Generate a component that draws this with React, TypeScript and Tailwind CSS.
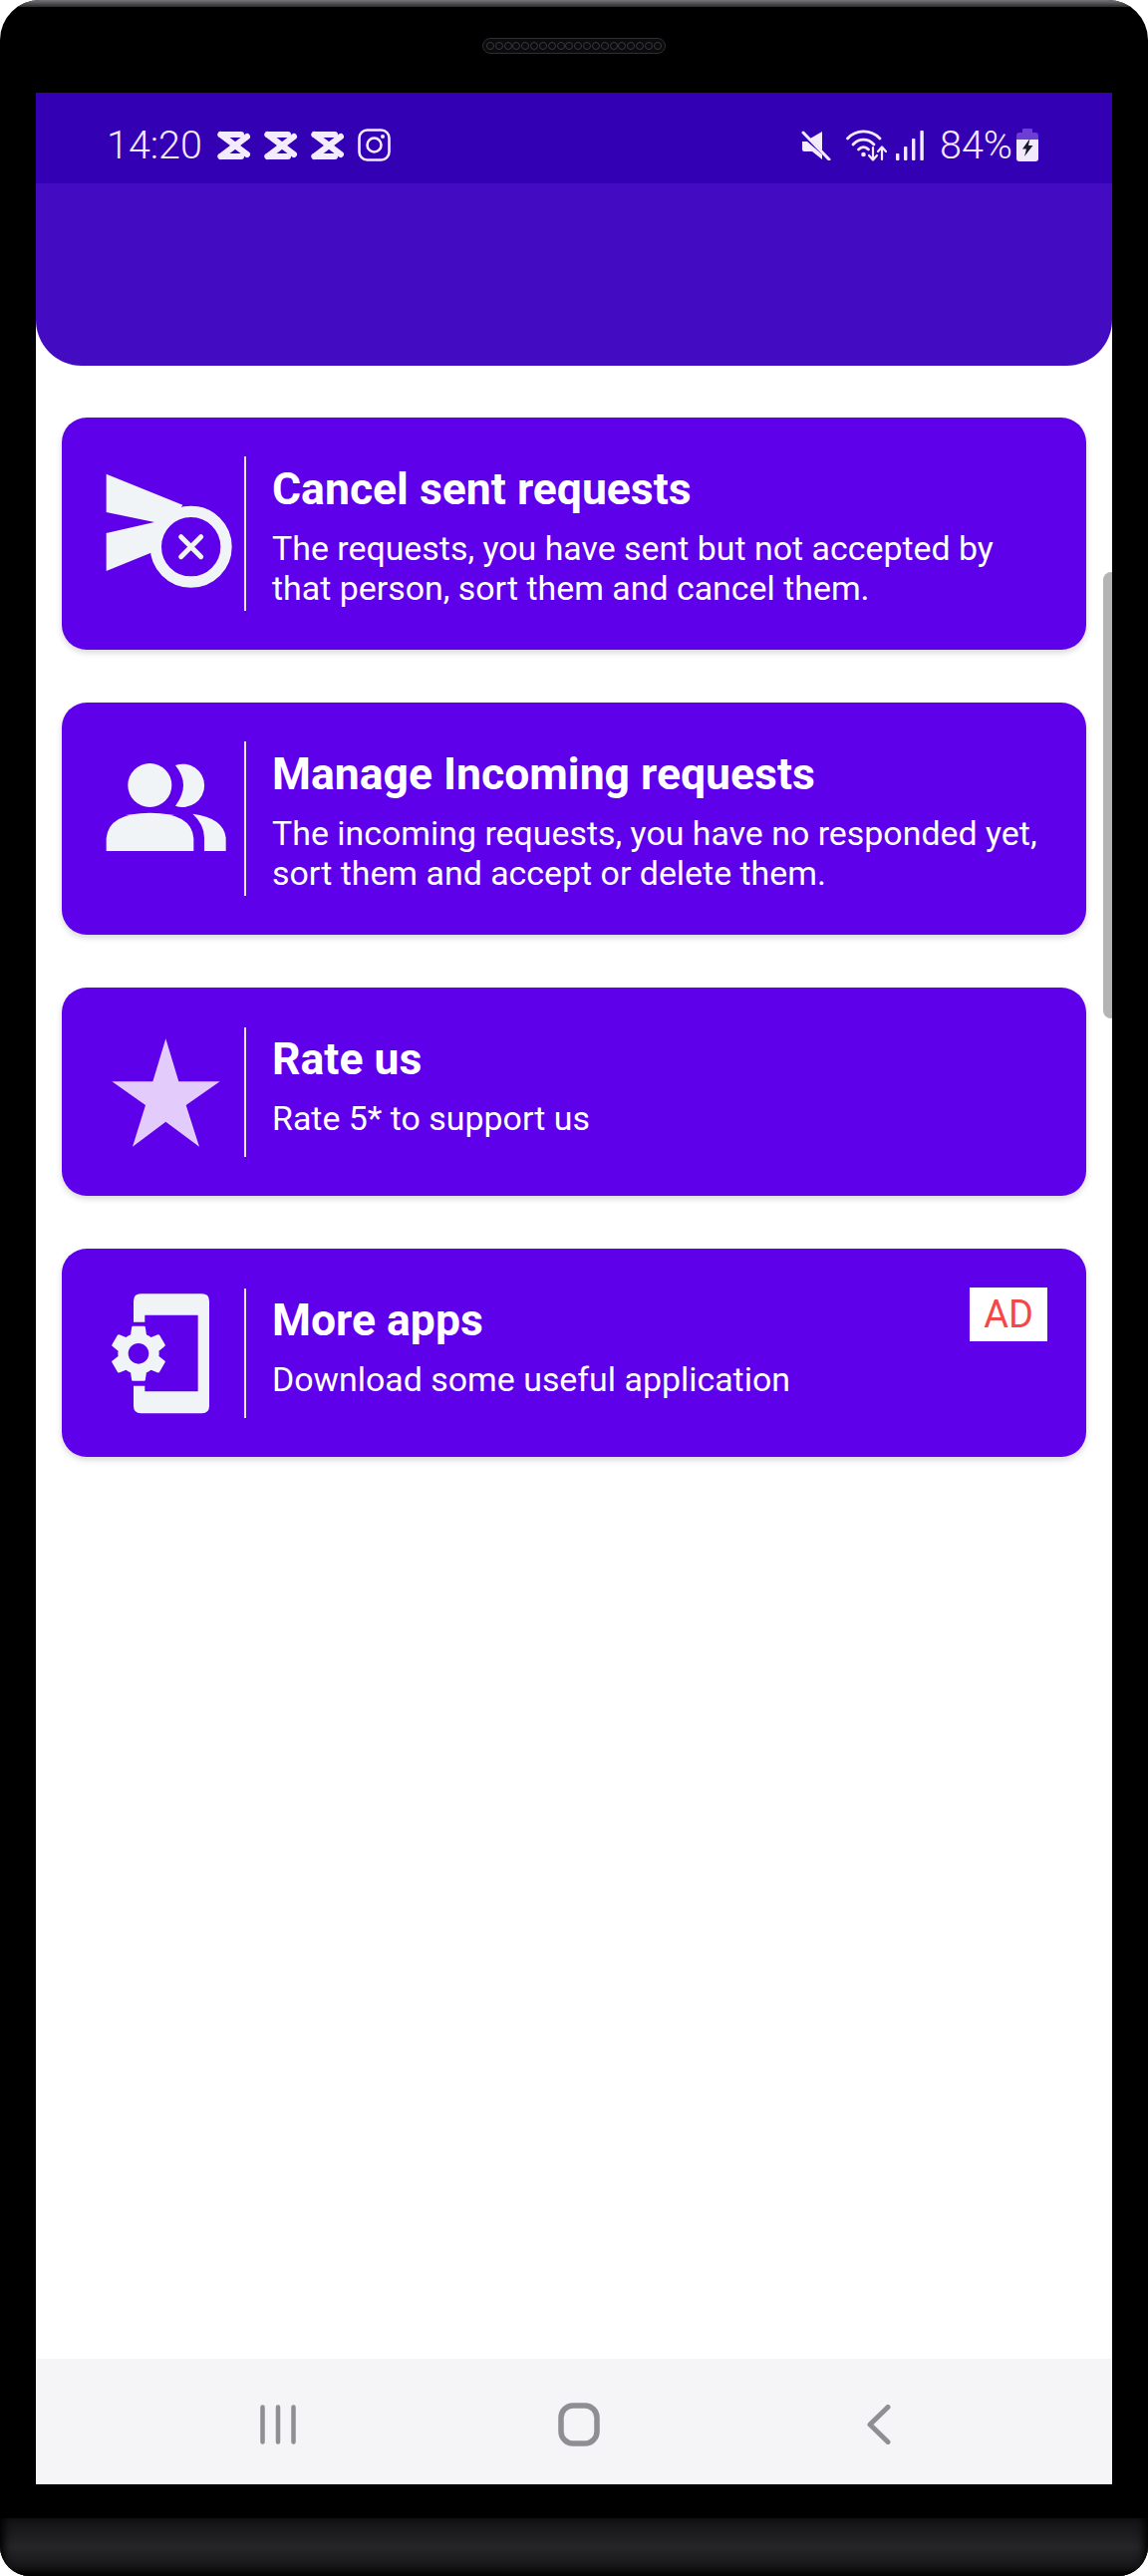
const ROBOTO = "font-['Roboto','Liberation_Sans',sans-serif]";

function CapCut() {
  return (
    <svg width="37" height="30" viewBox="0 0 37 30" className="shrink-0">
      <g fill="none" stroke="#f3ecff" strokeWidth="6" strokeLinecap="round" strokeLinejoin="round">
        <path d="M3.5 4 H24" />
        <path d="M3.5 26 H24" />
        <path d="M3.5 4 L30 24" />
        <path d="M3.5 26 L30 6" />
      </g>
    </svg>
  );
}

function Instagram() {
  return (
    <svg width="33" height="33" viewBox="0 0 33 33" className="shrink-0">
      <rect x="1.5" y="1.5" width="30" height="30" rx="8" fill="none" stroke="#f3ecff" strokeWidth="2.6" />
      <circle cx="16.5" cy="16.5" r="7" fill="none" stroke="#f3ecff" strokeWidth="2.6" />
      <circle cx="25" cy="8" r="2" fill="#f3ecff" />
    </svg>
  );
}

function Mute() {
  return (
    <svg width="30" height="30" viewBox="0 0 30 30" className="shrink-0">
      <path d="M21 1 V20 L9 8 Z M1 11 H6 L21 24 V29 L11 21 H3 Q1 21 1 19 Z" fill="#f3ecff" />
      <path d="M2 2 L28 29" stroke="#f3ecff" strokeWidth="3" strokeLinecap="round" />
    </svg>
  );
}

function Wifi() {
  return (
    <svg width="41" height="32" viewBox="0 0 41 32" className="shrink-0">
      <g fill="none" stroke="#f3ecff" strokeWidth="2.8" strokeLinecap="round">
        <path d="M1.5 9 C10 -0.5 25 -0.5 34 9" />
        <path d="M7 15 C13 8.5 22 8.5 28 15" />
        <path d="M12.5 20 C15.5 17 19.5 17 22.5 20" />
      </g>
      <circle cx="17.5" cy="25" r="2.3" fill="#f3ecff" />
      <g fill="none" stroke="#f3ecff" strokeWidth="2.2" strokeLinecap="round" strokeLinejoin="round">
        <path d="M27 18 V30 M23 26 L27 30.5 L31 26" />
        <path d="M36 30 V18 M32 22 L36 17.5 L40 22" />
      </g>
    </svg>
  );
}

function Signal() {
  return (
    <svg width="28" height="30" viewBox="0 0 28 30" className="shrink-0">
      <g fill="#f3ecff">
        <rect x="0" y="23" width="3.4" height="7" rx="1" />
        <rect x="8" y="16" width="3.4" height="14" rx="1" />
        <rect x="16" y="8" width="3.4" height="22" rx="1" />
        <rect x="24.4" y="0" width="3.4" height="30" rx="1" />
      </g>
    </svg>
  );
}

function Battery() {
  return (
    <svg width="22" height="33" viewBox="0 0 22 33" className="shrink-0">
      <path d="M7 0 H15 Q16 0 16 1 V4 H19 Q22 4 22 7 V11 H0 V7 Q0 4 3 4 H6 V1 Q6 0 7 0 Z" fill="#6b3fd4" />
      <path d="M0 11 H22 V30 Q22 33 19 33 H3 Q0 33 0 30 Z" fill="#f1eafd" />
      <path d="M13.5 10 L6 20.5 H10 L8 28 L16.5 17 H12 Z" fill="#1a1a2a" />
    </svg>
  );
}

function Speaker() {
  return (
    <div className="flex h-4 w-[184px] items-center justify-between rounded-full border border-[#2f2f33] bg-[#0b0b0d] px-[3px]">
      {Array.from({ length: 20 }).map((_, i) => (
        <span key={i} className="h-2 w-2 rounded-full border border-[#3a3a3e]" />
      ))}
    </div>
  );
}

const ICON = "#f1f4f6";
const CARD = "#5e00ea";

function SendCancel() {
  return (
    <svg width="184" height="160" viewBox="66 166 552 480" className="shrink-0">
      <path d="M200 225 L430 318 L340 460 L200 517 L200 403 L345 370 L200 340 Z" fill={ICON} />
      <circle cx="455" cy="444" r="106" fill={CARD} stroke={ICON} strokeWidth="34" />
      <path d="M425 414 L485 474 M485 414 L425 474" stroke={ICON} strokeWidth="15" strokeLinecap="round" />
    </svg>
  );
}

function People() {
  return (
    <svg width="184" height="160" viewBox="66 154 552 480" className="shrink-0">
      <g fill={ICON}>
        <circle cx="331" cy="292" r="66" />
        <path d="M200 490 V452 Q206 375 332 375 Q458 375 463 452 V490 Z" />
        <path d="M408 232 A65 65 0 1 1 408 354 Q432 322 432 292 Q432 262 408 232 Z" />
        <path d="M460 378 Q553 390 560 450 V490 H495 V450 Q495 410 460 378 Z" />
      </g>
    </svg>
  );
}

function Star() {
  return (
    <svg width="184" height="128" viewBox="66 154 552 384" className="shrink-0">
      <path d="M379 185 L418 314 L542 314 L440 385 L480 510 L379 435 L279 510 L318 385 L217 314 L340 314 Z" fill="#e3ccfc" />
    </svg>
  );
}

function PhoneGear() {
  return (
    <svg width="184" height="128" viewBox="66 190 552 384" className="shrink-0">
      <path
        d="M282 288 V225 Q282 203 304 203 H488 Q510 203 510 225 V541 Q510 563 488 563 H304 Q282 563 282 541 V480 H316 V497 H476 V267 H316 V288 Z"
        fill={ICON}
      />
      <path
        transform="translate(297 383) scale(8.6) translate(-12 -12)"
        fill={ICON}
        d="M19.14 12.94c.04-.3.06-.61.06-.94 0-.32-.02-.64-.07-.94l2.03-1.58c.18-.14.23-.41.12-.61l-1.92-3.32c-.12-.22-.37-.29-.59-.22l-2.39.96c-.5-.38-1.03-.7-1.62-.94l-.36-2.54c-.04-.24-.24-.41-.48-.41h-3.84c-.24 0-.43.17-.47.41l-.36 2.54c-.59.24-1.13.57-1.62.94l-2.39-.96c-.22-.08-.47 0-.59.22L2.74 8.87c-.12.21-.08.47.12.61l2.03 1.58c-.05.3-.09.63-.09.94s.02.64.07.94l-2.03 1.58c-.18.14-.23.41-.12.61l1.92 3.32c.12.22.37.29.59.22l2.39-.96c.5.38 1.03.7 1.62.94l.36 2.54c.05.24.24.41.48.41h3.84c.24 0 .44-.17.47-.41l.36-2.54c.59-.24 1.13-.56 1.62-.94l2.39.96c.22.08.47 0 .59-.22l1.92-3.32c.12-.22.07-.47-.12-.61l-2.01-1.58zM12 15.6c-1.98 0-3.6-1.62-3.6-3.6s1.62-3.6 3.6-3.6 3.6 1.62 3.6 3.6-1.62 3.6-3.6 3.6z"
      />
    </svg>
  );
}

function Card({
  icon,
  title,
  lines,
  tall,
  ad,
}: {
  icon: React.ReactNode;
  title: string;
  lines: string[];
  tall?: boolean;
  ad?: boolean;
}) {
  return (
    <div
      className={`relative flex items-center rounded-[25px] bg-[#5e00ea] shadow-[0_3px_6px_rgba(0,0,0,0.16)] ${
        tall ? "h-[233px]" : "h-[209px]"
      }`}
    >
      {icon}
      <div className={`-ml-[1px] w-[2px] shrink-0 bg-[#efe6fd] ${tall ? "h-[155px]" : "h-[130px]"}`} />
      <div className="flex flex-col self-start pt-[48px] pl-[26px] text-white">
        <div className="text-[44.5px] leading-[48px] font-bold">{title}</div>
        <div className="mt-[16px] text-[33.9px] leading-[40px]">
          {lines.map((l) => (
            <div key={l}>{l}</div>
          ))}
        </div>
      </div>
      {ad && (
        <div className="absolute top-[39px] right-[39px] flex h-[54px] w-[78px] items-center justify-center bg-white text-[38px] text-[#f44848]">
          AD
        </div>
      )}
    </div>
  );
}

export default function App() {
  return (
    <div className={`h-[2585px] w-[1152px] overflow-hidden bg-white ${ROBOTO}`}>
      <div className="flex h-full flex-col overflow-hidden rounded-t-[40px] rounded-b-[30px] bg-black">
        <div className="h-[7px] shrink-0 bg-gradient-to-b from-[#77777b] to-[#2b2b2e]" />
        <div className="flex h-[86px] shrink-0 justify-center pt-[31px]">
          <Speaker />
        </div>
        <div className="relative mx-[36px] flex h-[2400px] shrink-0 flex-col bg-white">
          <div className="flex h-[91px] shrink-0 items-center bg-[#3300b3] pt-[14px] pr-[74px] pl-[71px] text-[39.5px] font-[350] text-[#f3ecff]">
            <span className="mr-[15px]">14:20</span>
            <div className="flex items-center gap-[10px]">
              <CapCut />
              <CapCut />
              <CapCut />
              <Instagram />
            </div>
            <div className="ml-auto flex items-center">
              <Mute />
              <div className="ml-[15px]">
                <Wifi />
              </div>
              <div className="ml-[9px]">
                <Signal />
              </div>
              <span className="mr-[4px] ml-[16px]">84%</span>
              <Battery />
            </div>
          </div>
          <div className="h-[183px] shrink-0 rounded-b-[46px] bg-[#440cc2]" />
          <div className="flex flex-1 flex-col gap-[53px] px-[26px] pt-[52px]">
            <Card
              tall
              icon={<SendCancel />}
              title="Cancel sent requests"
              lines={["The requests, you have sent but not accepted by", "that person, sort them and cancel them."]}
            />
            <Card
              tall
              icon={<People />}
              title="Manage Incoming requests"
              lines={["The incoming requests, you have no responded yet,", "sort them and accept or delete them."]}
            />
            <Card icon={<Star />} title="Rate us" lines={["Rate 5* to support us"]} />
            <Card ad icon={<PhoneGear />} title="More apps" lines={["Download some useful application"]} />
          </div>
          <div className="flex h-[126px] shrink-0 items-center justify-between bg-[#f5f4f7] pt-[6px] pr-[222px] pl-[225px]">
            <svg width="36" height="40" viewBox="0 0 36 40">
              <g stroke="#8f8f93" strokeWidth="4.5" strokeLinecap="round">
                <path d="M2.5 2.5 V37.5 M18 2.5 V37.5 M33.5 2.5 V37.5" />
              </g>
            </svg>
            <svg width="42" height="44" viewBox="0 0 42 44" className="mr-[6px]">
              <rect x="3" y="3" width="36" height="38" rx="12" fill="none" stroke="#8f8f93" strokeWidth="5.5" />
            </svg>
            <svg width="24" height="40" viewBox="0 0 24 40">
              <path d="M21 2.5 L3 20 L21 37.5" fill="none" stroke="#8f8f93" strokeWidth="5" strokeLinecap="round" strokeLinejoin="round" />
            </svg>
          </div>
          <div className="absolute top-[481px] right-0 h-[448px] w-[9px] rounded-l-[8px] bg-[#b4b4b4]" />
        </div>
        <div className="h-[34px] shrink-0" />
        <div className="h-[58px] shrink-0 bg-gradient-to-b from-[#121214] via-[#262628] to-[#111113] shadow-[inset_10px_0_10px_-6px_#000,inset_-10px_0_10px_-6px_#000,inset_0_-8px_8px_-4px_#000]" />
      </div>
    </div>
  );
}
